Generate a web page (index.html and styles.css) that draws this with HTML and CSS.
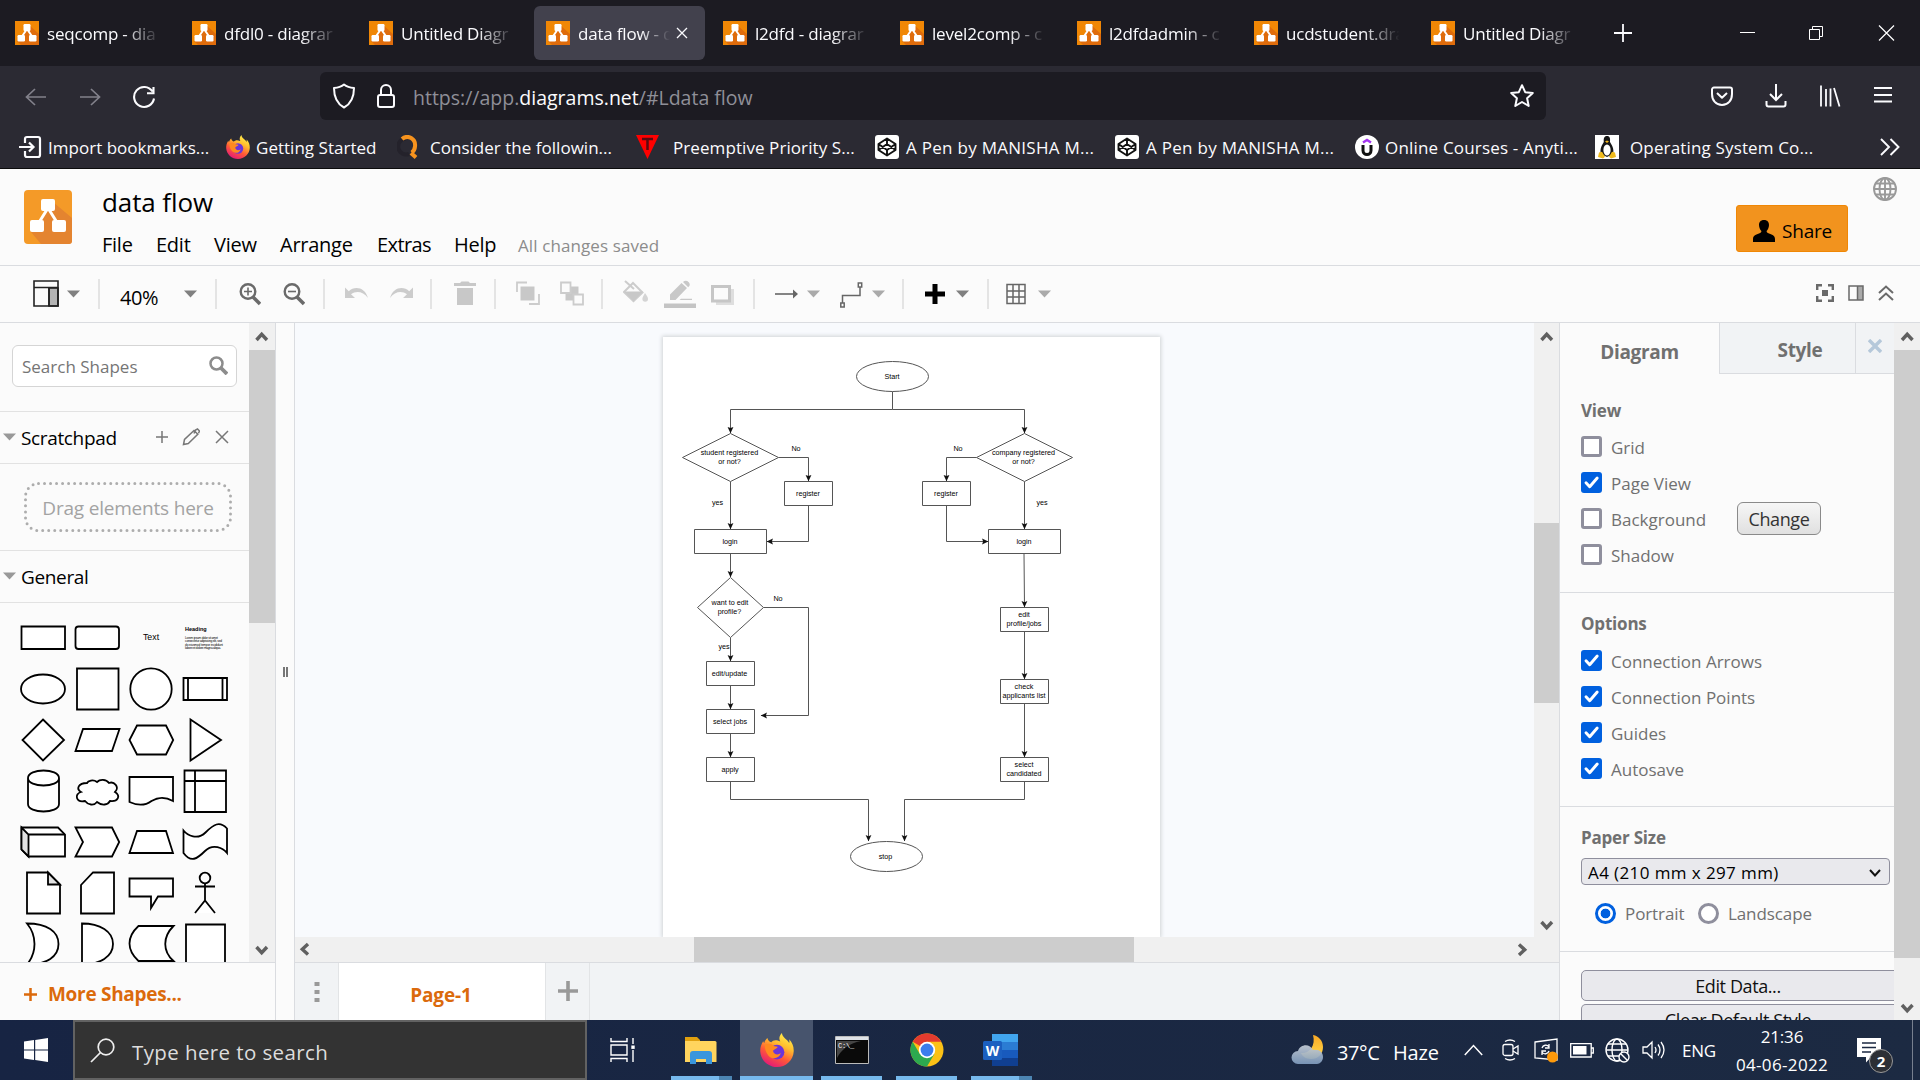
FILE: index.html
```html
<!DOCTYPE html>
<html lang="en">
<head>
<meta charset="utf-8">
<title>data flow - diagrams.net</title>
<link rel="stylesheet" href="styles.css">
</head>
<body>
<svg class="defs" aria-hidden="true">
  <defs>
    <linearGradient id="ffg" x1=".8" y1="0" x2=".3" y2="1"><stop offset="0" stop-color="#fff44f"/><stop offset=".35" stop-color="#ffbd2e"/><stop offset=".65" stop-color="#ff5a36"/><stop offset="1" stop-color="#e3177b"/></linearGradient>
    <linearGradient id="moon" x1="0" y1="0" x2="0" y2="1"><stop offset="0" stop-color="#f9a825"/><stop offset="1" stop-color="#ffdb4d"/></linearGradient>
    <linearGradient id="cloud" x1="0" y1="0" x2="0" y2="1"><stop offset="0" stop-color="#c4ccd6"/><stop offset="1" stop-color="#7f9bbd"/></linearGradient>
    <symbol id="dio" viewBox="0 0 24 24"><rect width="24" height="24" fill="#f08705"/><path d="M14 4l10 9v11H6l-4-4 7-9z" fill="#df6c0c"/><path d="M12 8L6.500 16M12 8l5.500 8" stroke="#fff" stroke-width="2"/><rect x="8.500" y="3" width="7" height="7" rx="1.200" fill="#fff"/><rect x="2.500" y="14" width="7.500" height="6.500" rx="1.200" fill="#fff"/><rect x="14" y="14" width="7.500" height="6.500" rx="1.200" fill="#fff"/></symbol>
    <symbol id="firefox" viewBox="0 0 24 24"><path d="M15.500 0c-2 2-2.300 4.200-1.200 6C11 4.500 9 5.300 8 6.500 6.500 6.200 5.600 5.200 5.200 3.500 4 4.500 3.200 5.800 3 7.200L2.200 5.800C.8 8 0 10.500.2 13.200.6 19.300 5.800 24 12 24s11.600-4.800 11.800-11.200c.1-3.400-1-6-3.200-8.400.2 1 .2 1.800 0 2.600C19.500 4.500 15.700 3.400 15.500 0z" fill="url(#ffg)"/><circle cx="12" cy="13.500" r="5.200" fill="#6a35d9"/><path d="M3.500 8.500c2.500-1.500 5-.8 6 .7l3 .5c-.3 1.500-3 1.800-3.300 3 .5 2.600 3.500 3.200 5.500 1.500-1 4-6 4.800-8.700 1.800-1.800-2-2.700-4.500-2.500-7.500z" fill="#ff8a1f"/></symbol>
    <symbol id="codepen" viewBox="0 0 24 24"><rect width="24" height="24" rx="3" fill="#fff"/><path d="M12 3.500l8.500 5.500v6L12 20.500 3.500 15V9zM3.500 9l8.500 6 8.500-6M3.500 15L12 9l8.500 6M12 3.500V9m0 6v5.500" fill="none" stroke="#111" stroke-width="1.900" stroke-linejoin="round"/></symbol>
    <symbol id="caret" viewBox="0 0 13 8"><path d="M0 .5h13L6.500 7.500z" fill="currentColor"/></symbol>
    <symbol id="up" viewBox="0 0 25 25"><path d="M7.500 15l5.200-5.700L18 15" fill="none" stroke="#606060" stroke-width="3.400"/></symbol>
    <symbol id="down" viewBox="0 0 25 25"><path d="M7.500 10l5.200 5.700L18 10" fill="none" stroke="#606060" stroke-width="3.400"/></symbol>
    <symbol id="check" viewBox="0 0 21 21"><path d="M5 10.800l3.700 4L16.200 6" fill="none" stroke="#fff" stroke-width="2.900" stroke-linecap="round" stroke-linejoin="round"/></symbol>
    <marker id="arr" viewBox="0 0 6 6" refX="5.500" refY="3" markerWidth="6.500" markerHeight="6.500" markerUnits="userSpaceOnUse" orient="auto"><path d="M0 .3L5.800 3 0 5.700l1-2.700z" fill="#111"/></marker>
  </defs>
</svg>

<div class="tabbar">
  <div class="tab"><svg class="fav"><use href="#dio"/></svg><span>seqcomp - dia</span></div>
  <div class="tab"><svg class="fav"><use href="#dio"/></svg><span>dfdl0 - diagrar</span></div>
  <div class="tab"><svg class="fav"><use href="#dio"/></svg><span>Untitled Diagr</span></div>
  <div class="tab active"><svg class="fav"><use href="#dio"/></svg><span>data flow - d</span><svg class="tabx" viewBox="0 0 12 12"><path d="M1 1l10 10M11 1L1 11" stroke="#fbfbfe" stroke-width="1.300"/></svg></div>
  <div class="tab"><svg class="fav"><use href="#dio"/></svg><span>l2dfd - diagrar</span></div>
  <div class="tab"><svg class="fav"><use href="#dio"/></svg><span>level2comp - c</span></div>
  <div class="tab"><svg class="fav"><use href="#dio"/></svg><span>l2dfdadmin - c</span></div>
  <div class="tab"><svg class="fav"><use href="#dio"/></svg><span>ucdstudent.dra</span></div>
  <div class="tab"><svg class="fav"><use href="#dio"/></svg><span>Untitled Diagr</span></div>
  <svg class="newtab" viewBox="0 0 18 18"><path d="M9 0v18M0 9h18" stroke="#fbfbfe" stroke-width="1.800"/></svg>
  <div class="winctl">
    <svg width="16" height="18" viewBox="0 0 16 18"><path d="M0 8.500h15" stroke="#fff"/></svg>
    <svg width="16" height="18" viewBox="0 0 16 18"><path d="M.5 5.500h10v10H.5zM3.500 5.500v-3h10v10h-3" fill="none" stroke="#fff"/></svg>
    <svg width="17" height="18" viewBox="0 0 17 18"><path d="M1 1.500l15 15M16 1.500l-15 15" stroke="#fff" stroke-width="1.200"/></svg>
  </div>
</div>

<div class="navbar">
  <div class="navbtns">
    <svg width="24" height="24" viewBox="0 0 24 24" fill="none" stroke="#82818b" stroke-width="1.700"><path d="M22 12H3M11 4l-8.500 8 8.500 8"/></svg>
    <svg width="24" height="24" viewBox="0 0 24 24" fill="none" stroke="#82818b" stroke-width="1.700"><path d="M2 12h19M13 4l8.500 8-8.500 8"/></svg>
    <svg width="24" height="24" viewBox="0 0 24 24" fill="none" stroke="#fbfbfe" stroke-width="2.100"><path d="M20.500 6.500A10 10 0 1 0 22 13.500M15 8.200h6.500V2"/></svg>
  </div>
  <div class="urlbar">
    <svg width="24" height="26" viewBox="0 0 24 26" fill="none" stroke="#fbfbfe" stroke-width="2"><path d="M12 1.500C9 4 5.500 4.800 2 5c0 9 2.500 15.500 10 19.500C19.500 20.500 22 14 22 5c-3.500-.2-7-1-10-3.500z" stroke-linejoin="round"/></svg>
    <svg class="lock" width="18" height="26" viewBox="0 0 18 26" fill="none" stroke="#fbfbfe" stroke-width="2"><rect x="1" y="12" width="16" height="12" rx="2"/><path d="M4 12V7a5 5 0 0 1 10 0v5"/></svg>
    <div class="url">https://app.<b>diagrams.net</b>/#Ldata flow</div>
    <svg class="star" width="26" height="26" viewBox="0 0 26 26" fill="none" stroke="#fbfbfe" stroke-width="2" stroke-linejoin="round"><path d="M13 2.200l3.200 7 7.600.8-5.700 5.200 1.600 7.800L13 19l-6.700 4 1.600-7.800L2.200 10l7.600-.8z"/></svg>
  </div>
  <div class="navright">
    <svg width="22" height="24" viewBox="0 0 22 24" fill="none" stroke="#fbfbfe" stroke-width="2"><path d="M3 3.500h16a2 2 0 0 1 2 2V10c0 6.500-4 11-10 11S1 16.500 1 10V5.500a2 2 0 0 1 2-2zM6 9l5 4.800L16 9" stroke-linejoin="round"/></svg>
    <svg width="22" height="24" viewBox="0 0 22 24" fill="none" stroke="#fbfbfe" stroke-width="2"><path d="M11 0v16M5 10l6 6 6-6M1.500 17v3.500a2 2 0 0 0 2 2h15a2 2 0 0 0 2-2V17"/></svg>
    <svg width="22" height="24" viewBox="0 0 22 24" fill="none" stroke="#fbfbfe" stroke-width="1.800"><path d="M2 1.500v21M7 5v17.500M11.500 4.500v18M15 4l5.500 18.500"/></svg>
    <svg width="20" height="24" viewBox="0 0 20 24" stroke="#fbfbfe" stroke-width="2"><path d="M1 4h18M1 11h18M1 17.500h18"/></svg>
  </div>
</div>

<div class="bookmarks">
  <div class="bm bm1"><svg width="24" height="24" viewBox="0 0 24 24" fill="none" stroke="#fbfbfe" stroke-width="2.200"><path d="M6 8V4a2 2 0 0 1 2-2h11a2 2 0 0 1 2 2v16a2 2 0 0 1-2 2H8a2 2 0 0 1-2-2v-4M0 12h14M10 7.500l4.500 4.500-4.500 4.500"/></svg><span>Import bookmarks...</span></div>
  <div class="bm bm2"><svg width="24" height="24"><use href="#firefox"/></svg><span>Getting Started</span></div>
  <div class="bm bm3"><svg width="24" height="24" viewBox="0 0 24 24" fill="none" stroke-width="4"><path d="M9 3.500A8 8 0 1 0 12 19" stroke="#24222b"/><path d="M5 4c6-5 14 0 13 7.500-.2 3-1.500 4.700-3.300 6" stroke="#f7931e"/><path d="M14 18l5 4.500" stroke="#f7931e"/></svg><span>Consider the followin...</span></div>
  <div class="bm bm4"><svg width="24" height="24" viewBox="0 0 24 24"><path d="M0 0h23L11.500 24z" fill="#f00"/><path d="M6 4h11M11.500 4v11" stroke="#5b0a10" stroke-width="2.500"/></svg><span>Preemptive Priority S...</span></div>
  <div class="bm bm5"><svg width="24" height="24"><use href="#codepen"/></svg><span>A Pen by MANISHA M...</span></div>
  <div class="bm bm5"><svg width="24" height="24"><use href="#codepen"/></svg><span>A Pen by MANISHA M...</span></div>
  <div class="bm bm6"><svg width="24" height="24" viewBox="0 0 24 24" fill="none"><circle cx="12" cy="12" r="12" fill="#fff"/><path d="M8 7.500L12 5l4 2.500" stroke="#a435f0" stroke-width="2.500"/><path d="M8 10v5.500a4 4 0 0 0 8 0V10" stroke="#111" stroke-width="3"/></svg><span>Online Courses - Anyti...</span></div>
  <div class="bm bm7"><svg width="24" height="24" viewBox="0 0 24 24"><rect width="24" height="24" fill="#fff"/><path d="M12 1c-3 0-3.500 2.500-3.200 6C7 10 4.500 14 6 19l6 3 6-3c1.500-5-1.200-9-3-12 .3-3.500 0-6-3-6z" fill="#161616"/><ellipse cx="12" cy="15" rx="3.600" ry="5.500" fill="#fff"/><path d="M10 6.500l2 1.600 2-1.600-2-1z" fill="#f1b51c"/><path d="M4 17.500l3-.8 3 5-2 1.800-5-1.500zM20 17.500l-3-.8-3 5 2 1.800 5-1.500z" fill="#f0bb1d"/></svg><span>Operating System Co...</span></div>
  <svg class="more" width="20" height="18" viewBox="0 0 20 18" fill="none" stroke="#fbfbfe" stroke-width="1.900"><path d="M1 1l8 8-8 8M10.500 1l8 8-8 8"/></svg>
</div>

<div class="app">
  <header class="head">
    <svg class="logo" viewBox="0 0 48 54"><rect width="48" height="54" rx="4" fill="#f49a28"/><path d="M29 12l19 16v23a3 3 0 0 1-3 3H17L7 42l14-20z" fill="#e48430"/><path d="M24 18L14 34M24 18l10 16" stroke="#fff" stroke-width="3"/><rect x="17" y="9" width="14" height="12" rx="2" fill="#fff"/><rect x="6" y="30" width="14" height="12" rx="2" fill="#fff"/><rect x="28" y="30" width="14" height="12" rx="2" fill="#fff"/></svg>
    <div class="titles">
      <div class="title">data flow</div>
      <nav class="menu"><span class="m1">File</span><span class="m2">Edit</span><span class="m3">View</span><span class="m4">Arrange</span><span class="m5">Extras</span><span class="m6">Help</span><em>All changes saved</em></nav>
    </div>
    <div class="share"><svg width="22" height="22" viewBox="0 0 22 22"><path d="M11 0c3.500 0 5 2.300 5 5 0 2.600-1.200 4.700-2.400 6 0 1.200.6 1.800 1.800 2.200 3.600 1.300 6.600 2 6.600 5.800v3H0v-3c0-3.800 3-4.500 6.600-5.800 1.200-.4 1.800-1 1.800-2.200C7.200 9.700 6 7.600 6 5c0-2.700 1.500-5 5-5z"/></svg><span>Share</span></div>
    <svg class="globe" viewBox="0 0 24 24" fill="none" stroke="#999" stroke-width="1.900"><circle cx="12" cy="12" r="11"/><ellipse cx="12" cy="12" rx="5.500" ry="11"/><path d="M12 1v22M1 12h22M3 6.500h18M3 17.500h18"/></svg>
  </header>

  <div class="toolbar">
    <div class="grp g1"><svg width="26" height="30" viewBox="0 0 26 30" fill="none" stroke="#222" stroke-width="1.600"><path d="M16 9h9v18h-9z" fill="#b4b4b4"/><path d="M1 2h24v25H1zM1 8.500h24M16 8.500V27"/></svg><svg class="car dk"><use href="#caret"/></svg></div>
    <div class="grp g2"><span>40%</span><svg class="car dk"><use href="#caret"/></svg></div>
    <div class="grp g3">
      <svg width="22" height="30" viewBox="0 0 22 30" fill="none" stroke="#6a6a6a" stroke-width="2.400"><circle cx="9" cy="12.500" r="7.300"/><path d="M14 18l7 7" stroke-width="3.600"/><path d="M5 12.500h8M9 8.500v8" stroke-width="1.600"/></svg>
      <svg width="22" height="30" viewBox="0 0 22 30" fill="none" stroke="#6a6a6a" stroke-width="2.400"><circle cx="9" cy="12.500" r="7.300"/><path d="M14 18l7 7" stroke-width="3.600"/><path d="M5 12.500h8" stroke-width="1.600"/></svg>
    </div>
    <div class="grp g4">
      <svg width="24" height="30" viewBox="0 0 24 30"><path d="M0 8.500v10.500h10l-4-3.800C11 11.500 18 12 23 19 20 8 9.500 6.500 3.800 12.200z" fill="#ccc"/></svg>
      <svg width="24" height="30" viewBox="0 0 24 30"><path d="M24 8.500v10.500H14l4-3.800C13 11.500 6 12 1 19 4 8 14.500 6.500 20.200 12.200z" fill="#ccc"/></svg>
    </div>
    <div class="grp g5"><svg width="22" height="30" viewBox="0 0 22 30"><path d="M0 4h6l1.500-1.500h7L16 4h6v3H0zM3 9h16v17H3z" fill="#c8c8c8"/></svg></div>
    <div class="grp g6">
      <svg width="24" height="30" viewBox="0 0 24 30" fill="none" stroke="#ccc" stroke-width="1.800"><path d="M4.500 7.500h14v14h-14z" fill="#c8c8c8" stroke="none"/><path d="M1 13V3.500h10M13 25h10V15"/></svg>
      <svg width="24" height="30" viewBox="0 0 24 30" fill="none" stroke="#ccc" stroke-width="1.800"><path d="M5.500 7.500h13v14h-13z" fill="#c8c8c8" stroke="none"/><path d="M1 3.500h9.500V14H1zM13.500 15.500H23V25.500h-9.500z" fill="#fbfbfb"/></svg>
    </div>
    <div class="grp g7">
      <svg width="26" height="30" viewBox="0 0 26 30" fill="none" stroke="#ccc" stroke-width="2"><path d="M2 2l9 8M10 4l9.500 9.500-9 8.500L1 13z"/><path d="M1 12.500h19l-9.500 9.500z" fill="#c8c8c8" stroke="none"/><path d="M22 14c2 3 3 4.500 3 6a2.800 2.800 0 0 1-5.600 0c0-1.500 1-3 2.600-6z" fill="#d4d4d4" stroke="none"/></svg>
      <svg width="32" height="30" viewBox="0 0 32 30"><path d="M0 24.500h32V29H0z" fill="#c4c4c4"/><path d="M6 21v-5.500L17.500 4l5.500 5-11.500 12zM19 3c2-2 4-1.500 5.500 0s2 3.500-.3 5.200zM17 19.800h11v1.300H15.500z" fill="#c8c8c8"/></svg>
      <svg width="24" height="30" viewBox="0 0 24 30"><path d="M5 10h18v16H5z" fill="#dedede"/><path d="M1.500 7.500h17v14.500h-17z" fill="#fbfbfb" stroke="#c6c6c6" stroke-width="3"/></svg>
    </div>
    <div class="grp g8">
      <svg width="24" height="30" viewBox="0 0 24 30"><path d="M0 15h19" stroke="#666" stroke-width="1.600"/><path d="M18 10.500l5 4.500-5 4.500z" fill="#666"/></svg>
      <svg class="car lt"><use href="#caret"/></svg>
      <svg class="con" width="24" height="30" viewBox="0 0 24 30" fill="none" stroke="#666" stroke-width="1.500"><path d="M2.500 24v-7.500H20V8M.8 24h3.400v4H.8zM18.300 4h3.400v4h-3.400z"/></svg>
      <svg class="car lt"><use href="#caret"/></svg>
    </div>
    <div class="grp g9"><svg width="20" height="30" viewBox="0 0 20 30"><path d="M10 5v20M0 15h20" stroke="#000" stroke-width="5"/></svg><svg class="car dk"><use href="#caret"/></svg></div>
    <div class="grp g10"><svg width="20" height="30" viewBox="0 0 20 30" fill="none" stroke="#666" stroke-width="1.500"><path d="M1 5.500h18v19H1zM7 5.500v19M13 5.500v19M1 12h18M1 18h18"/></svg><svg class="car lt"><use href="#caret"/></svg></div>
    <div class="tbr">
      <svg width="18" height="18" viewBox="0 0 18 18"><path d="M1.200 6V1.200H6M12 1.200h4.800V6M16.800 12v4.800H12M6 16.800H1.200V12" fill="none" stroke="#6a6a6a" stroke-width="2.400"/><path d="M6 6h6v6H6z" fill="#6a6a6a"/></svg>
      <svg width="16" height="18" viewBox="0 0 16 18"><path d="M9.500 2H15v14H9.500z" fill="#aaa"/><path d="M1 2h14v14H1zM9.500 2v14" fill="none" stroke="#6a6a6a" stroke-width="1.500"/></svg>
      <svg width="16" height="18" viewBox="0 0 16 18" fill="none" stroke="#6a6a6a" stroke-width="2"><path d="M1 9l7-6.500L15 9M1 16l7-6.500 7 6.500"/></svg>
    </div>
  </div>

  <div class="body">
    <aside class="side">
      <div class="sidetop">
        <div class="lib">
          <div class="searchwrap"><div class="search"><span>Search Shapes</span><svg width="19" height="19" viewBox="0 0 19 19" fill="none" stroke="#8c8c8c" stroke-width="2.500"><circle cx="7.500" cy="7.500" r="6"/><path d="M12 12l6 6" stroke-width="3.800"/></svg></div></div>
          <div class="sec"><svg class="car"><use href="#caret"/></svg><span>Scratchpad</span>
            <svg class="s1" width="14" height="14" viewBox="0 0 14 14" stroke="#777" stroke-width="1.500"><path d="M7 1v12M1 7h12"/></svg>
            <svg class="s2" width="18" height="18" viewBox="0 0 18 18" fill="none" stroke="#777" stroke-width="1.500"><path d="M1.500 16.500l1-5L12 2.500l3.800 3.700-9.500 9.300zM12 5.500l1.500-3.500 2-1 2 2-1 2.300"/></svg>
            <svg class="s3" width="14" height="14" viewBox="0 0 14 14" stroke="#777" stroke-width="1.500"><path d="M1 1l12 12M13 1L1 13"/></svg>
          </div>
          <div class="dragrow"><div class="drag"><svg width="208" height="50" viewBox="0 0 208 50"><rect x="1.500" y="1.500" width="205" height="47" rx="13" fill="none" stroke="#adadad" stroke-width="3" stroke-linecap="round" stroke-dasharray="0 6.020"/></svg><span>Drag elements here</span></div></div>
          <div class="sec gen"><svg class="car"><use href="#caret"/></svg><span>General</span></div>
          <div class="shapes">
            <svg><path d="M-21.500-11.500H22V11h-43.500z"/></svg>
            <svg><rect x="-21.500" y="-11.500" width="43.500" height="22.500" rx="3"/></svg>
            <svg><text class="t1" x="0" y="2">Text</text></svg>
            <svg><text class="t2" x="-20" y="-7">Heading</text><text class="t3" x="-20" y="1" textLength="33">Lorem ipsum dolor sit amet</text><text class="t3" x="-20" y="4.300" textLength="37">consectetur adipisicing elit, sed</text><text class="t3" x="-20" y="7.600" textLength="38">do eiusmod tempor incididunt</text><text class="t3" x="-20" y="11" textLength="36">labore et dolore magna aliqua.</text></svg>
            <svg><ellipse rx="22" ry="14.500"/></svg>
            <svg><path d="M-20-20.500H21.500V20.500H-20z"/></svg>
            <svg><circle r="20.700"/></svg>
            <svg><path d="M-21.500-11H22V11h-43.500zM-17-11V11M17.500-11V11"/></svg>
            <svg><path d="M0-20.500L21 0 0 20.500-20.500 0z"/></svg>
            <svg><path d="M-14-11H22.500L15 11h-36.500z"/></svg>
            <svg><path d="M-14-14.500h29L22.200 0 15 14.500h-29L-21.500 0z"/></svg>
            <svg><path d="M-14.500-20.500L16 0l-30.500 20.500z"/></svg>
            <svg><path d="M-15-13v26c0 10 31 10 31 0v-26c0-10-31-10-31 0c0 10 31 10 31 0"/></svg>
            <svg><path d="M-10-8c-9 0-11 6-6 9-7 2-5 11 4 9 3 4 9 5 12 1 5 4 11 3 13-1 8 1 11-5 5-9 5-5-1-11-6-9-3-4-9-4-12-1-4-3-9-1-10 1z"/></svg>
            <svg><path d="M-21.500-14H22V10c-11-6-18-2-21.500 0-4 3-11 6-22 1z"/></svg>
            <svg><path d="M-20.500-20.500h41.500v41.500h-41.500zM-20.500-10h41.500M-10-20.500v41.500"/></svg>
            <svg><path d="M-21.500-14.500H15l7 7V14.500h-36.500l-7-7z"/><path d="M-21.500-14.500l7 7V14.500l-7-7z" class="shade"/><path d="M-14.500-7.500H22"/></svg>
            <svg><path d="M-21.500-14.500H15L22.200 0 15 14.500h-36.500L-14 0z"/></svg>
            <svg><path d="M-14-11h29l7 22h-43.500z"/></svg>
            <svg><path d="M-21.500-11.500c4 5 14 10 22 2s14-12 21.500-4v24.500c-4-5-14-10-22-2s-14 12-21.500 2z"/></svg>
            <svg><path d="M-16-20.500H5l12 12v29h-33z"/><path d="M5-20.500v12h12z" class="shade"/></svg>
            <svg><path d="M-4-20.500H17v41h-33v-28.500z"/></svg>
            <svg><path d="M-21.500-14.500H22V3.500H7L0 15V3.500h-21.500z"/></svg>
            <svg><circle cy="-15" r="5.300"/><path d="M0-9.500V7.500M-10-6.500h20M-10 20L0 7.500 10 20"/></svg>
            <svg><path d="M-16-20.500c20 0 31.500 8 31.500 20.500S4 20.500-16 20.500c10-12 10-29 0-41z"/></svg>
            <svg><path d="M-15-20.500c18 0 31 8 31 20.500s-13 20.500-31 20.500z"/></svg>
            <svg><path d="M-12.500-18h35c-11 11-11 25 0 35h-35c-12-11-12-24 0-35z"/></svg>
            <svg><path d="M-19-19.500h39v41h-39z"/></svg>
          </div>
        </div>
        <div class="vbar v1"><svg width="25" height="25"><use href="#up"/></svg><i></i><svg width="25" height="25"><use href="#down"/></svg></div>
      </div>
      <div class="moreshapes"><svg width="13" height="13" viewBox="0 0 13 13"><path d="M6.500 0v13M0 6.500h13" stroke="#db6a0c" stroke-width="2.500"/></svg><span>More Shapes...</span></div>
    </aside>
    <div class="split"><i></i><i></i></div>

    <main class="center">
      <div class="canvasrow">
        <div class="canvas">
          <svg class="page" viewBox="663 337 497 600">
            <g class="edges">
              <path class="n" d="M892.500 391.500v18"/>
              <path d="M892.500 409.500h-162V433"/><path d="M892.500 409.500h132V433"/>
              <path d="M778.500 457.500h30V481"/><path d="M976.500 457.500h-30V481"/>
              <path d="M730.500 481.500V529"/><path d="M1024.500 481.500V529"/>
              <path d="M808.500 505.500v36H767"/><path d="M946.500 505.500v36h41.500"/>
              <path d="M730.500 553.500V577"/><path d="M1024 553.500l.5 53.500"/>
              <path d="M763.500 607.500h45v108H761"/>
              <path d="M730.500 637.500V661"/><path d="M730.500 685.500V709"/><path d="M730.500 733.500V757"/>
              <path d="M1024.500 631.500V679"/><path d="M1024.500 703.500V757"/>
              <path d="M730.500 781.500v18h138V841"/><path d="M1024.500 781.500v18h-120V841"/>
            </g>
            <g class="nodes">
              <ellipse cx="892.500" cy="376.500" rx="36" ry="15"/><ellipse cx="886.500" cy="856.500" rx="36" ry="15"/>
              <path d="M730.500 433.500l48 24-48 24-48-24zM1024.500 433.500l48 24-48 24-48-24zM730.500 577.500l33 30-33 30-33-30z"/>
              <path d="M784.500 481.500h48v24h-48zM922.500 481.500h48v24h-48zM694.500 529.500h72v24h-72zM988.500 529.500h72v24h-72zM706.500 661.500h48v24h-48zM706.500 709.500h48v24h-48zM706.500 757.500h48v24h-48zM1000.500 607.500h48v24h-48zM1000.500 679.500h48v24h-48zM1000.500 757.500h48v24h-48z"/>
            </g>
            <g class="txt">
              <text x="892" y="379">Start</text>
              <text x="729.500" y="455">student registered</text><text x="729.500" y="464">or not?</text>
              <text x="1023.500" y="455">company registered</text><text x="1023.500" y="464">or not?</text>
              <text x="796" y="451">No</text><text x="958" y="451">No</text>
              <text x="808" y="496">register</text><text x="946" y="496">register</text>
              <text x="717.500" y="505">yes</text><text x="1042" y="505">yes</text>
              <text x="730" y="544">login</text><text x="1024" y="544">login</text>
              <text x="730" y="605">want to edit</text><text x="729.500" y="614">profile?</text>
              <text x="778" y="601">No</text><text x="724" y="649">yes</text>
              <text x="729.500" y="676">edit/update</text><text x="730" y="724">select jobs</text><text x="730" y="772">apply</text>
              <text x="1024" y="617">edit</text><text x="1024" y="626">profile/jobs</text>
              <text x="1024" y="689">check</text><text x="1024" y="698">applicants list</text>
              <text x="1024" y="767">select</text><text x="1024" y="776">candidated</text>
              <text x="885.500" y="859">stop</text>
            </g>
          </svg>
        </div>
        <div class="vbar v2"><svg width="25" height="25"><use href="#up"/></svg><i></i><svg width="25" height="25"><use href="#down"/></svg></div>
      </div>
      <div class="hbar"><svg class="lf" width="25" height="25"><use href="#up"/></svg><i></i><svg class="rt" width="25" height="25"><use href="#up"/></svg></div>
      <div class="pages">
        <div class="dots"><svg width="6" height="22" viewBox="0 0 6 22"><path d="M.5 1h5v4h-5zM.5 9h5v4h-5zM.5 17h5v4h-5z" fill="#999"/></svg></div>
        <div class="ptab">Page-1</div>
        <div class="padd"><svg width="20" height="20" viewBox="0 0 20 20"><path d="M10 0v20M0 10h20" stroke="#999" stroke-width="3.600"/></svg></div>
      </div>
    </main>

    <aside class="fmt">
      <div class="fmtmain">
        <div class="ftabs"><div class="ft1">Diagram</div><div class="ft2">Style</div><div class="ft3"><svg width="14" height="14" viewBox="0 0 14 14"><path d="M1 1l12 12M13 1L1 13" stroke="#b5c8da" stroke-width="3.400"/></svg></div></div>
        <section class="f1">
          <h3>View</h3>
          <label><b class="cb"></b>Grid</label>
          <label><b class="cb on"><svg><use href="#check"/></svg></b>Page View</label>
          <label><b class="cb"></b><span class="bgl">Background</span><span class="change">Change</span></label>
          <label><b class="cb"></b>Shadow</label>
        </section>
        <section class="f2">
          <h3>Options</h3>
          <label><b class="cb on"><svg><use href="#check"/></svg></b>Connection Arrows</label>
          <label><b class="cb on"><svg><use href="#check"/></svg></b>Connection Points</label>
          <label><b class="cb on"><svg><use href="#check"/></svg></b>Guides</label>
          <label><b class="cb on"><svg><use href="#check"/></svg></b>Autosave</label>
        </section>
        <section class="f3">
          <h3>Paper Size</h3>
          <div class="sel"><span>A4 (210 mm x 297 mm)</span><svg width="12" height="8" viewBox="0 0 12 8"><path d="M1 1l5 5.500L11 1" fill="none" stroke="#111" stroke-width="2"/></svg></div>
          <div class="radios"><b class="rd on"></b><span class="r1">Portrait</span><b class="rd"></b><span>Landscape</span></div>
        </section>
        <section class="f4"><div class="btn">Edit Data...</div><div class="btn cut">Clear Default Style</div></section>
      </div>
      <div class="vbar v3"><svg width="26" height="25"><use href="#up"/></svg><i></i><svg width="26" height="25"><use href="#down"/></svg></div>
    </aside>
  </div>
</div>

<footer class="task">
  <div class="start"><svg width="24" height="24" viewBox="0 0 24 24" fill="#fff"><path d="M0 3.500l10-1.400v9.300H0zM11.200 1.900L24 0v11.400H11.200zM0 12.600h10v9.300L0 20.500zM11.200 12.600H24V24l-12.800-1.900z"/></svg></div>
  <div class="tsearch"><svg width="25" height="25" viewBox="0 0 25 25" fill="none" stroke="#eee" stroke-width="1.700"><circle cx="16" cy="9" r="7.800"/><path d="M10.500 14.500L1 24"/></svg><span>Type here to search</span></div>
  <div class="tv"><svg width="26" height="24" viewBox="0 0 26 24" fill="none" stroke="#fff" stroke-width="1.400"><path d="M1 0v3.500h16V0M1 7h16v10H1zM1 24v-3.500h16V24M23 0v6M23 12v12"/><path d="M21.300 7.500h3.400v3.400h-3.400z" fill="#fff" stroke="none"/></svg></div>
  <div class="ti multi"><svg width="34" height="34" viewBox="0 0 34 34"><path d="M1 4h12l3 3v4H1z" fill="#e0a00f"/><path d="M1 8h30a1.500 1.500 0 0 1 1.500 1.500V29H1z" fill="#ffd45e"/><path d="M6 31V21a3 3 0 0 1 3-3h16a3 3 0 0 1 3 3v10h-6v-5H12v5z" fill="#3a96dd"/></svg></div>
  <div class="ti ff"><svg width="34" height="36"><use href="#firefox"/></svg></div>
  <div class="ti"><svg width="34" height="28" viewBox="0 0 34 28"><path d="M.5.500h33v27H.5z" fill="#0a0a0a" stroke="#bbb"/><path d="M1 1h32v3H1z" fill="#dfe3e8"/><path d="M2 5h24C14 7 6 14 2 22z" fill="#444"/><text x="3" y="12" class="cmd">C:\_</text></svg></div>
  <div class="ti"><svg width="34" height="34" viewBox="0 0 34 34"><circle cx="17" cy="17" r="16.500" fill="#fbc116"/><path d="M17 17L2.700 8.700A16.500 16.500 0 0 1 31.300 8.700H17z" fill="#e33b2e"/><path d="M2.700 8.700A16.500 16.500 0 0 0 17 33.500l7.200-12.300L17 17 9.800 21z" fill="#2da94f"/><circle cx="17" cy="17" r="8.200" fill="#fff"/><circle cx="17" cy="17" r="6.400" fill="#3b7ded"/></svg></div>
  <div class="ti multi word"><svg width="36" height="34" viewBox="0 0 36 34"><path d="M9 1h26v8H9z" fill="#41a5ee"/><path d="M9 9h26v8H9z" fill="#2b7cd3"/><path d="M9 17h26v8H9z" fill="#185abd"/><path d="M9 25h26v8H9z" fill="#103f91"/><rect y="8" width="19" height="19" rx="1.500" fill="#1b5fc0"/><text x="9.500" y="22.500" class="w">W</text></svg></div>
  <div class="tray">
    <svg width="34" height="32" viewBox="0 0 34 32"><path d="M22 1c6 1 10 6 10 12s-4 12-12 12c-5 0-9-3-10-6 8 1 15-7 12-18z" fill="url(#moon)"/><path d="M7 30a6.500 6.500 0 0 1 0-13c2-7 12-8 15-1 7-1 10 3 10 7s-3 7-6 7z" fill="url(#cloud)" fill-opacity=".93"/></svg>
    <span class="temp">37°C</span><span class="haze">Haze</span>
    <svg class="chev" width="19" height="12" viewBox="0 0 19 12" fill="none" stroke="#fff" stroke-width="1.500"><path d="M.8 11l8.700-9.500L18.200 11"/></svg>
    <svg class="cam" width="18" height="24" viewBox="0 0 18 24" fill="none" stroke="#fff" stroke-width="1.300"><rect x="1" y="6.500" width="10" height="11" rx="2"/><path d="M11 11l5-3v8l-5-3M3 3.500q5-3 10 0M3 20.500q5 3 10 0"/></svg>
    <svg class="upd" width="25" height="25" viewBox="0 0 25 25" fill="none" stroke="#fff" stroke-width="1.300"><path d="M1 4l22-3v21L1 20zM8 10c1-3 5-4 7-1M15 6v4h-4M15 13c-1 3-5 4-7 1M8 17v-4h4"/><circle cx="18.500" cy="19" r="5.500" fill="#ff9a0a" stroke="none"/></svg>
    <svg class="bat" width="24" height="15" viewBox="0 0 24 15"><path d="M.7.700h20.500v13.300H.7zM21.500 5h1.800v5h-1.800" fill="none" stroke="#fff" stroke-width="1.300"/><path d="M3 3h13.500v8.500H3z" fill="#fff"/></svg>
    <svg class="net" width="25" height="25" viewBox="0 0 25 25" fill="none" stroke="#fff" stroke-width="1.400"><circle cx="12" cy="12" r="11"/><ellipse cx="12" cy="12" rx="5" ry="11"/><path d="M1 12h22M3 6h18M3 18h14"/><circle cx="19" cy="19" r="5" fill="#1b2842"/><path d="M15.500 15.500l7 7"/></svg>
    <svg class="vol" width="24" height="20" viewBox="0 0 24 20" fill="none" stroke="#fff" stroke-width="1.300"><path d="M1 7h4l5-5v16l-5-5H1zM13 7q2 3 0 6M16 4.500q4 5.500 0 11M19 2q6 8 0 16"/></svg>
    <span class="eng">ENG</span>
    <div class="clock"><span>21:36</span><span class="date">04-06-2022</span></div>
    <div class="notif"><svg width="24" height="25" viewBox="0 0 24 25"><path d="M0 0h24v19H14l-5 5.500V19H0z" fill="#fff"/><path d="M5 5h14M5 9.500h14M5 14h9" stroke="#1b2842" stroke-width="1.600"/></svg><b>2</b></div>
    <i class="desk"></i>
  </div>
</footer>
</body>
</html>
```
FILE: styles.css
```css
* { box-sizing: border-box; }
body { margin: 0; width: 1920px; height: 1080px; overflow: hidden; display: flex; flex-direction: column; font-family: "Open Sans", "Noto Sans", sans-serif; font-size: 17px; letter-spacing: -0.2px; background: #1c1b22; white-space: nowrap; }
svg { display: block; flex: none; }
.defs { position: absolute; width: 0; height: 0; }

/* browser chrome */
.tabbar { flex: none; height: 66px; background: #1c1b22; display: flex; align-items: center; padding-left: 3px; color: #fbfbfe; }
.tab { flex: none; width: 171px; margin-right: 6px; height: 54px; border-radius: 6px; display: flex; align-items: center; padding-left: 12px; }
.tab.active { background: #42414d; }
.fav { width: 24px; height: 24px; margin-right: 8px; }
.tab span { width: 116px; overflow: hidden; -webkit-mask-image: linear-gradient(90deg, #000 66%, transparent 98%); mask-image: linear-gradient(90deg, #000 66%, transparent 98%); }
.tab.active span { width: 94px; }
.tabx { width: 12px; height: 12px; margin-left: 4px; }
.newtab { width: 18px; height: 18px; margin-left: 18px; }
.winctl { margin-left: auto; margin-right: 25px; display: flex; gap: 53px; }
.navbar { flex: none; height: 60px; padding-top: 6px; background: #2b2a33; display: flex; }
.navbtns { width: 320px; padding: 13px 0 0 24px; display: flex; gap: 30px; }
.urlbar { width: 1226px; height: 48px; border-radius: 6px; background: #1c1b22; display: flex; align-items: center; padding: 0 11px 0 12px; }
.lock { margin-left: 21px; }
.url { margin: 2px 0 0 18px; font-size: 19.500px; color: #8f8f98; letter-spacing: 0; }
.url b { font-weight: 400; color: #fbfbfe; }
.star { margin-left: auto; }
.navright { padding: 12px 0 0 165px; display: flex; gap: 32px; }
.bookmarks { flex: none; height: 43px; background: #2b2a33; border-bottom: 1px solid #0c0c0d; display: flex; padding: 0 20px 1px 19px; align-items: center; color: #fbfbfe; }
.bm { flex: none; display: flex; align-items: center; width: 240px; letter-spacing: 0.02px; }
.bm span { margin: 1px 0 0 7px; }
.bm1 { width: 207px; } .bm1 span { margin-left: 5px; }
.bm2 { width: 171px; } .bm2 span { margin-left: 6px; }
.bm3 { width: 239px; } .bm3 span { margin-left: 9px; }
.bm4 { width: 239px; letter-spacing: 0.08px; } .bm4 span { margin-left: 13px; }
.bm5 { letter-spacing: 0.28px; }
.bm6 { letter-spacing: 0.18px; } .bm6 span { margin-left: 6px; }
.bm7 { letter-spacing: 0.15px; } .bm7 span { margin-left: 11px; }
.more { margin-left: auto; }

/* application header */
.app { flex: none; height: 851px; background: #fbfbfb; display: flex; flex-direction: column; color: #000; overflow: hidden; }
.head { flex: none; height: 97px; border-bottom: 1px solid #dadce0; display: flex; padding-left: 24px; }
.logo { width: 48px; height: 54px; margin-top: 21px; }
.titles { margin-left: 30px; flex: 1; }
.title { font-size: 26px; line-height: 36px; margin-top: 15px; letter-spacing: -0.1px; }
.menu { display: flex; font-size: 20px; line-height: 28px; margin-top: 11px; align-items: baseline; letter-spacing: -0.25px; }
.m1 { width: 54px; } .m2 { width: 58px; } .m3 { width: 66px; } .m4 { width: 97px; } .m5 { width: 77px; letter-spacing: -0.6px; } .m6 { width: 64px; }
.menu em { font-style: normal; font-size: 17px; color: #8c8c8c; letter-spacing: 0.1px; }
.share { margin-top: 36px; width: 112px; height: 47px; background: #f2931e; border: 1px solid #f08705; border-radius: 3px; display: flex; align-items: center; padding: 5px 0 0 16px; font-size: 19px; }
.share svg { margin-top: -1px; }
.share span { margin-left: 7px; }
.globe { width: 24px; height: 24px; margin: 8px 23px 0 25px; }

.toolbar { flex: none; height: 57px; border-bottom: 1px solid #dadce0; display: flex; align-items: center; }
.grp { flex: none; height: 30px; display: flex; align-items: center; border-right: 2px solid #e4e4e4; }
.car { width: 13px; height: 8px; color: #999; }
.car.dk { color: #808080; } .car.lt { color: #aaa; }
.g1 { width: 100px; padding-left: 33px; gap: 8px; }
.g2 { width: 117px; padding-left: 20px; font-size: 20px; justify-content: space-between; padding-right: 18px; letter-spacing: -0.4px; }
.g2 span { margin-top: 6px; }
.g3 { width: 108px; padding-left: 22px; gap: 22px; }
.g4 { width: 107px; padding-left: 20px; gap: 20px; }
.g5 { width: 64px; padding-left: 22px; }
.g6 { width: 107px; padding-left: 20px; gap: 20px; }
.g7 { width: 152px; padding-left: 20px; gap: 15px; }
.g8 { width: 149px; padding-left: 20px; gap: 8px; }
.con { margin-left: 12px; }
.g9 { width: 85px; padding-left: 21px; gap: 11px; }
.g10 { border: 0; padding-left: 17px; gap: 12px; }
.tbr { margin-left: auto; padding: 0 26px 2px 0; display: flex; gap: 14px; }

/* body columns */
.body { flex: 1; min-height: 0; display: flex; overflow: hidden; }
.side { flex: none; width: 276px; border-right: 1px solid #dadce0; display: flex; flex-direction: column; }
.sidetop { height: 640px; display: flex; border-bottom: 1px solid #dadce0; }
.lib { width: 249px; overflow: hidden; }
.vbar { flex: none; width: 26px; background: #f0f0f0; display: flex; flex-direction: column; padding-top: 2px; }
.vbar i { background: #cdcdcd; }
.vbar svg:last-child { margin-top: auto; }
.v1 i { height: 273px; }
.searchwrap { height: 88px; padding: 22px 12px 0; }
.search { height: 42px; border: 1px solid #d5d5d5; border-radius: 6px; background: #fff; display: flex; align-items: center; justify-content: space-between; padding: 0 8px 1px 9px; color: #757575; letter-spacing: 0; }
.search span { margin-top: 2px; }
.sec { height: 53px; border-top: 1px solid #e2e2e2; border-bottom: 1px solid #e2e2e2; display: flex; align-items: center; padding: 0 0 2px 3px; font-size: 19px; letter-spacing: -0.35px; }
.sec span { margin: 2px 0 0 5px; width: 134px; }
.s2 { margin-left: 13px; } .s3 { margin-left: 15px; }
.dragrow { height: 86px; padding: 18px 0 0 24px; }
.drag { position: relative; width: 208px; height: 50px; display: flex; align-items: center; justify-content: center; color: #a3a3a3; font-size: 19px; letter-spacing: -0.2px; padding-top: 2px; }
.drag svg { position: absolute; left: 0; top: 0; }
.shapes { margin-top: 9px; padding-left: 15.500px; display: grid; grid-template-columns: repeat(4, 54px); grid-auto-rows: 51px; }
.shapes svg { width: 54px; height: 51px; overflow: visible; fill: #fff; stroke: #000; stroke-width: 1.800; }
.shapes svg > * { transform: translate(27px, 26px); }
.shapes text { stroke: none; fill: #000; font-family: "Liberation Sans", Arial, sans-serif; letter-spacing: 0; }
.shapes .shade { fill: #e2e2e2; }
.t1 { font-size: 8.800px; text-anchor: middle; }
.t2 { font-size: 5.500px; font-weight: 700; }
.t3 { font-size: 3.200px; }
.moreshapes { flex: 1; display: flex; align-items: center; padding: 5px 0 0 24px; color: #db6a0c; font-weight: 700; font-size: 19px; letter-spacing: -0.3px; }
.moreshapes span { margin-left: 11px; }
.split { flex: none; width: 19px; border-right: 1px solid #dadce0; display: flex; gap: 1px; align-items: center; justify-content: center; padding-left: 1px; }
.split i { width: 2px; height: 10px; background: #777; }

.center { flex: none; width: 1265px; display: flex; flex-direction: column; border-right: 1px solid #dadce0; }
.canvasrow { height: 614px; display: flex; }
.canvas { width: 1239px; background: #f8fafd; padding: 14px 0 0 368px; overflow: hidden; }
.page { width: 497px; height: 600px; background: #fff; box-shadow: 0 0 4px 1px #d0d3d6; }
.v2 { width: 25px; } .v2 i { margin-top: 173px; height: 180px; }
.edges path { fill: none; stroke: #555; stroke-width: 1; marker-end: url(#arr); }
.edges .n { marker-end: none; }
.nodes > * { fill: #fff; stroke: #555; stroke-width: 1; }
.txt { font-family: "Liberation Sans", Arial, sans-serif; font-size: 7.200px; letter-spacing: 0; text-anchor: middle; fill: #000; }
.hbar { flex: none; height: 25px; background: #f0f0f0; display: flex; padding-right: 25px; }
.hbar i { margin-left: 374px; width: 440px; background: #cdcdcd; }
.lf { transform: translateX(-2px) rotate(-90deg); } .rt { transform: rotate(90deg); margin-left: auto; }
.pages { flex: 1; border-top: 1px solid #dadce0; background: #f1f3f5; display: flex; }
.pages > div { display: flex; align-items: center; justify-content: center; border-right: 1px solid #e2e4e6; }
.dots { width: 44px; }
.ptab { width: 207px; background: #fff; color: #db6a0c; font-weight: 700; font-size: 19px; padding-top: 7px; padding-right: 2px; letter-spacing: -0.1px; }
.padd { width: 44px; }
.padd svg { margin-top: -2px; }

.fmt { flex: 1; display: flex; color: #707070; }
.fmtmain { width: 334px; overflow: hidden; }
.v3 i { height: 608px; }
.ftabs { display: flex; height: 51px; font-weight: 700; font-size: 19px; letter-spacing: -0.3px; }
.ftabs div { display: flex; align-items: center; justify-content: center; padding-top: 4px; }
.ftabs .ft1 { width: 159px; padding-top: 7px; }
.ft2, .ft3 { background: #f1f3f5; border-left: 1px solid #dadce0; border-bottom: 1px solid #dadce0; }
.ft2 { width: 136px; padding-left: 25px; }
.ftabs .ft3 { width: 39px; padding-top: 0; padding-bottom: 5px; }
section { padding: 0 0 0 21px; border-bottom: 1px solid #dadce0; font-size: 17px; letter-spacing: 0; }
h3 { margin: 0; font-size: 17px; line-height: 24px; letter-spacing: -0.2px; }
label { display: flex; height: 36px; align-items: center; padding-top: 2px; }
.cb, .rd { display: block; flex: none; width: 21px; height: 21px; border: 3px solid #8f8f9d; border-radius: 3px; background: #fff; margin: -2px 9px 0 0; }
.cb.on { border: 0; background: #0060df; }
.cb svg { width: 21px; height: 21px; }
.f1 { height: 219px; padding-top: 25px; } .f1 h3 { margin-bottom: 5px; }
.f2 { height: 214px; padding-top: 19px; } .f2 h3 { margin-bottom: 6px; }
.bgl { width: 126px; padding-top: 1px; }
.change { width: 84px; height: 33px; margin-top: -2px; border: 1px solid #8a8a8a; border-radius: 6px; background: linear-gradient(#f6f6f6, #e0e0e0); color: #333; display: flex; align-items: center; justify-content: center; padding-top: 2px; font-size: 18px; letter-spacing: -0.4px; }
.f3 { height: 145px; padding-top: 19px; }
.sel { margin-top: 8px; width: 309px; height: 27px; border: 1px solid #8f8f9d; border-radius: 4px; background: #e9e9ed; color: #000; display: flex; align-items: center; justify-content: space-between; padding: 2px 8px 0 6px; letter-spacing: 0.4px; }
.radios { display: flex; align-items: center; padding: 17px 0 0 14px; line-height: 22px; letter-spacing: -0.1px; }
.radios span { padding-top: 1px; }
.rd { border-radius: 50%; margin-top: 0; }
.rd.on { border-color: #0060df; background: radial-gradient(circle, #0060df 4.500px, #fff 5.200px); }
.radios .r1 { width: 73px; }
.f4 { border: 0; padding-top: 18px; }
.btn { width: 330px; height: 31px; margin-bottom: 3px; border: 1px solid #8f8f9d; border-radius: 5px; background: #e9e9ed; color: #111; text-align: center; line-height: 31px; padding-right: 16px; font-size: 18px; letter-spacing: -0.4px; }
.btn.cut { height: 16px; margin: 0; overflow: hidden; border-bottom: 0; border-radius: 5px 5px 0 0; }

/* taskbar */
.task { flex: none; height: 60px; background: linear-gradient(90deg, #172443, #1c2a42); display: flex; color: #fff; }
.start { flex: none; width: 73px; display: flex; align-items: center; padding-left: 24px; }
.tsearch { flex: none; width: 514px; border: 2px solid #626262; background: #333; display: flex; align-items: center; padding-left: 15px; font-size: 20.500px; color: #ddd; }
.tsearch span { margin: 3px 0 0 17px; letter-spacing: 0.4px; }
.tv { flex: none; width: 77px; padding-left: 23px; display: flex; align-items: center; }
.ti { flex: none; width: 61px; margin: 0 7px; border-bottom: 4px solid #76b9ed; display: flex; align-items: center; justify-content: center; padding-top: 3px; }
.ti.ff { width: 73px; background: #47546d; margin: 0 1px; }
.ti.multi { border-image: linear-gradient(90deg, #76b9ed 77%, #4c85b3 77%) 1; border-style: solid; border-width: 0 0 4px; padding-right: 1px; }
.cmd { font: 7px "Liberation Mono", monospace; fill: #fff; }
.w { font: 700 14px "Open Sans", sans-serif; fill: #fff; text-anchor: middle; letter-spacing: 0; }
.tray { flex: none; margin-left: auto; width: 629px; display: flex; align-items: center; }
.temp { font-size: 20px; margin: 4px 0 0 12px; width: 56px; letter-spacing: -0.4px; }
.haze { font-size: 20px; margin: 4px 0 0 0; width: 71px; letter-spacing: -0.2px; }
.cam { margin-left: 19px; } .upd { margin-left: 14px; } .bat { margin-left: 11px; } .net { margin-left: 11px; } .vol { margin-left: 12px; }
.eng { margin-left: 16px; width: 53px; }
.clock { display: flex; flex-direction: column; align-items: center; width: 94px; gap: 4px; line-height: 24px; padding-top: 1px; }
.date { letter-spacing: 0.35px; }
.notif { position: relative; margin-left: 28px; width: 55px; }
.notif b { position: absolute; left: 12px; top: 11px; width: 24px; height: 24px; border-radius: 50%; background: #2c2f35; border: 1px solid #999; font-size: 15px; line-height: 22px; text-align: center; letter-spacing: 0; }
.desk { width: 1px; height: 60px; background: #77808f; }
```
